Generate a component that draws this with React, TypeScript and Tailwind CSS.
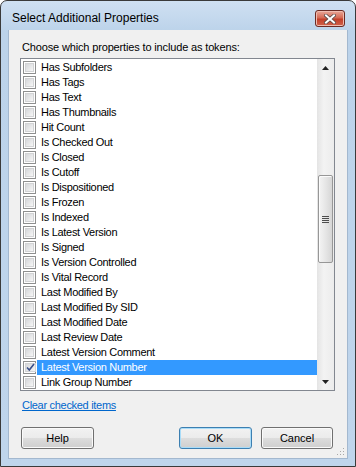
import React from 'react';

const properties = [
  'Has Subfolders',
  'Has Tags',
  'Has Text',
  'Has Thumbnails',
  'Hit Count',
  'Is Checked Out',
  'Is Closed',
  'Is Cutoff',
  'Is Dispositioned',
  'Is Frozen',
  'Is Indexed',
  'Is Latest Version',
  'Is Signed',
  'Is Version Controlled',
  'Is Vital Record',
  'Last Modified By',
  'Last Modified By SID',
  'Last Modified Date',
  'Last Review Date',
  'Latest Version Comment',
  'Latest Version Number',
  'Link Group Number',
];

const font = { fontFamily: '"Liberation Sans", Arial, sans-serif' };

function Checkbox({ checked }: { checked: boolean }) {
  return (
    <span className="w-[13px] h-[13px] shrink-0 border border-[#8e8f8f] bg-white p-[1px] flex">
      <span className="flex-1 border border-[#d2d3d5] bg-[linear-gradient(135deg,#d5d7da,#f6f6f6)] flex items-center justify-center">
        {checked && (
          <svg width="9" height="9" viewBox="0 0 9 9" className="overflow-visible">
            <path d="M1 4.5 L3.3 7 L8 1" fill="none" stroke="#3a4f8a" strokeWidth="1.6" />
          </svg>
        )}
      </span>
    </span>
  );
}

function Row({ label, checked, selected }: { label: string; checked: boolean; selected: boolean }) {
  return (
    <div className="h-[15px] flex items-center pl-[2px]">
      <Checkbox checked={checked} />
      <div
        className={`ml-[1px] flex-1 h-full flex items-center pl-[4px] text-[11px] tracking-[-0.3px] leading-none ${
          selected ? 'bg-[#3399ff] text-white' : 'text-black'
        }`}
      >
        {label}
      </div>
    </div>
  );
}

function Scrollbar() {
  return (
    <div className="w-[17px] shrink-0 flex flex-col bg-[linear-gradient(to_right,#e4e4e4,#f3f3f3_40%,#ececec)]">
      <div className="h-[17px] flex items-center justify-center">
        <svg width="7" height="4" viewBox="0 0 7 4">
          <path d="M0 4 L3.5 0 L7 4 Z" fill="#222" />
        </svg>
      </div>
      <div className="h-[99px]" />
      <div className="h-[88px] mx-[1px] rounded-[2px] border border-[#979797] bg-[linear-gradient(to_right,#f4f4f4,#e6e6e6_50%,#d6d6d6)] shadow-[inset_1px_1px_0_#fbfbfb] flex items-center justify-center">
        <div className="flex flex-col gap-[1px]">
          <div className="w-[7px] h-[1px] bg-[#4d4d4d]" />
          <div className="w-[7px] h-[1px] bg-[#4d4d4d]" />
          <div className="w-[7px] h-[1px] bg-[#4d4d4d]" />
          <div className="w-[7px] h-[1px] bg-[#4d4d4d]" />
        </div>
      </div>
      <div className="flex-1" />
      <div className="h-[17px] flex items-center justify-center">
        <svg width="7" height="4" viewBox="0 0 7 4">
          <path d="M0 0 L7 0 L3.5 4 Z" fill="#222" />
        </svg>
      </div>
    </div>
  );
}

function Button({ children, primary }: { children: React.ReactNode; primary?: boolean }) {
  return (
    <button
      className={`h-[22px] rounded-[3px] border text-[11px] text-black bg-[linear-gradient(to_bottom,#f2f2f2_0%,#ebebeb_50%,#dddddd_50%,#cfcfcf_100%)] ${
        primary
          ? 'border-[#3c7fb1] shadow-[inset_0_0_0_1px_#a9dcf8]'
          : 'border-[#707070] shadow-[inset_0_0_0_1px_#fafafa]'
      }`}
    >
      {children}
    </button>
  );
}

export default function App() {
  return (
    <div style={font} className="w-[356px] h-[467px] flex flex-col border border-[#3a3a3a] rounded-t-[7px] bg-[linear-gradient(to_bottom,#cfe0f2,#bcd3ea_30px,#bfd5ec)] overflow-hidden">
      <div className="h-[29px] shrink-0 flex items-start justify-between pl-[11px] pr-[10px]">
        <span className="mt-[11px] text-[12px] text-black leading-none">Select Additional Properties</span>
        <div className="mt-[9px] w-[30px] h-[17px] rounded-[3px] border border-[#6b2b24] bg-[linear-gradient(to_bottom,#e9a899,#d56a55_45%,#c3402a_55%,#d0634c)] shadow-[inset_0_0_0_1px_#f0bcb0] flex items-center justify-center">
          <svg width="12" height="10" viewBox="0 0 12 10">
            <path d="M2 1.5 L10 8.5 M10 1.5 L2 8.5" stroke="#5a4a48" strokeWidth="3.6" strokeLinecap="square" />
            <path d="M2 1.5 L10 8.5 M10 1.5 L2 8.5" stroke="#ffffff" strokeWidth="2" strokeLinecap="square" />
          </svg>
        </div>
      </div>

      <div className="flex-1 mx-[7px] mb-[7px] bg-[#f0f0f0] border border-[#a3b8cf] border-t-0 flex flex-col relative">
        <div className="pt-[10px] pl-[13px] h-[28px] text-[11px] tracking-[-0.15px] leading-[14px] text-black">
          Choose which properties to include as tokens:
        </div>

        <div className="ml-[11px] mr-[12px] h-[333px] border border-[#828790] bg-white flex">
          <div className="flex-1 pt-[1px]">
            {properties.map((p, i) => (
              <Row key={p} label={p} checked={i === 20} selected={i === 20} />
            ))}
          </div>
          <Scrollbar />
        </div>

        <div className="mt-[6px] pl-[13px] h-[14px] leading-[14px]">
          <span className="text-[11px] tracking-[-0.3px] text-[#0066cc] underline">Clear checked items</span>
        </div>

        <div className="mt-[14px] flex px-[12px]">
          <div className="w-[73px]">
            <Button>
              <span className="block w-[71px]">Help</span>
            </Button>
          </div>
          <div className="flex-1" />
          <div className="w-[73px] mr-[9px]">
            <Button primary>
              <span className="block w-[71px]">OK</span>
            </Button>
          </div>
          <div className="w-[72px] mr-[2px]">
            <Button>
              <span className="block w-[70px]">Cancel</span>
            </Button>
          </div>
        </div>

        <svg className="absolute right-[2px] bottom-[2px]" width="10" height="10" viewBox="0 0 10 10">
          <g fill="#a8a8a8">
            <rect x="8" y="2" width="1" height="1" />
            <rect x="5" y="5" width="1" height="1" />
            <rect x="8" y="5" width="1" height="1" />
            <rect x="2" y="8" width="1" height="1" />
            <rect x="5" y="8" width="1" height="1" />
            <rect x="8" y="8" width="1" height="1" />
          </g>
        </svg>
      </div>
    </div>
  );
}
